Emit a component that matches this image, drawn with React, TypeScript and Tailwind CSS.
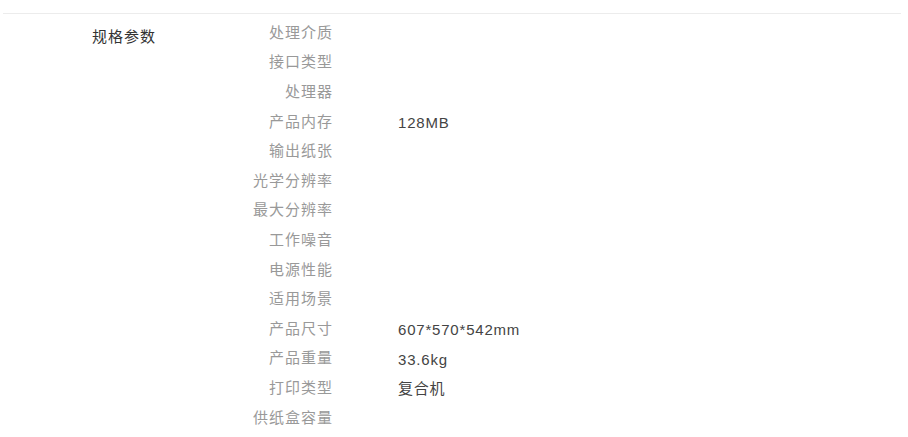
import React from 'react';

const specs: { label: string; value?: string }[] = [
    { label: '处理介质' },
    { label: '接口类型' },
    { label: '处理器' },
    { label: '产品内存', value: '128MB' },
    { label: '输出纸张' },
    { label: '光学分辨率' },
    { label: '最大分辨率' },
    { label: '工作噪音' },
    { label: '电源性能' },
    { label: '适用场景' },
    { label: '产品尺寸', value: '607*570*542mm' },
    { label: '产品重量', value: '33.6kg' },
    { label: '打印类型', value: '复合机' },
    { label: '供纸盒容量' },
];

const App: React.FC = () => {
    return (
        <div className="w-[908px] h-[437px] bg-white overflow-hidden" style={{ fontFamily: '"Liberation Sans", "Noto Sans CJK SC", sans-serif' }}>
            <div className="pt-[13px]">
                <div className="ml-[3px] w-[898px] border-t border-[#ececec]" />
                <div className="flex pt-[4px]">
                    <div className="w-[92px] shrink-0" />
                    <div className="w-[80px] shrink-0 pt-[9px] text-[15px] leading-[20px] tracking-[1px] text-[#333]">规格参数</div>
                    <div className="flex flex-col">
                        {specs.map(s => (
                            <div key={s.label} className="flex h-[29.6px] items-center">
                                <div className="w-[161px] text-right text-[15px] leading-[20px] tracking-[1px] text-[#999]">{s.label}</div>
                                <div className="pl-[65px] pt-[3px] text-[15px] leading-[20px] tracking-[0.8px] text-[#444]">{s.value ?? ''}</div>
                            </div>
                        ))}
                    </div>
                </div>
            </div>
        </div>
    );
};

export default App;
